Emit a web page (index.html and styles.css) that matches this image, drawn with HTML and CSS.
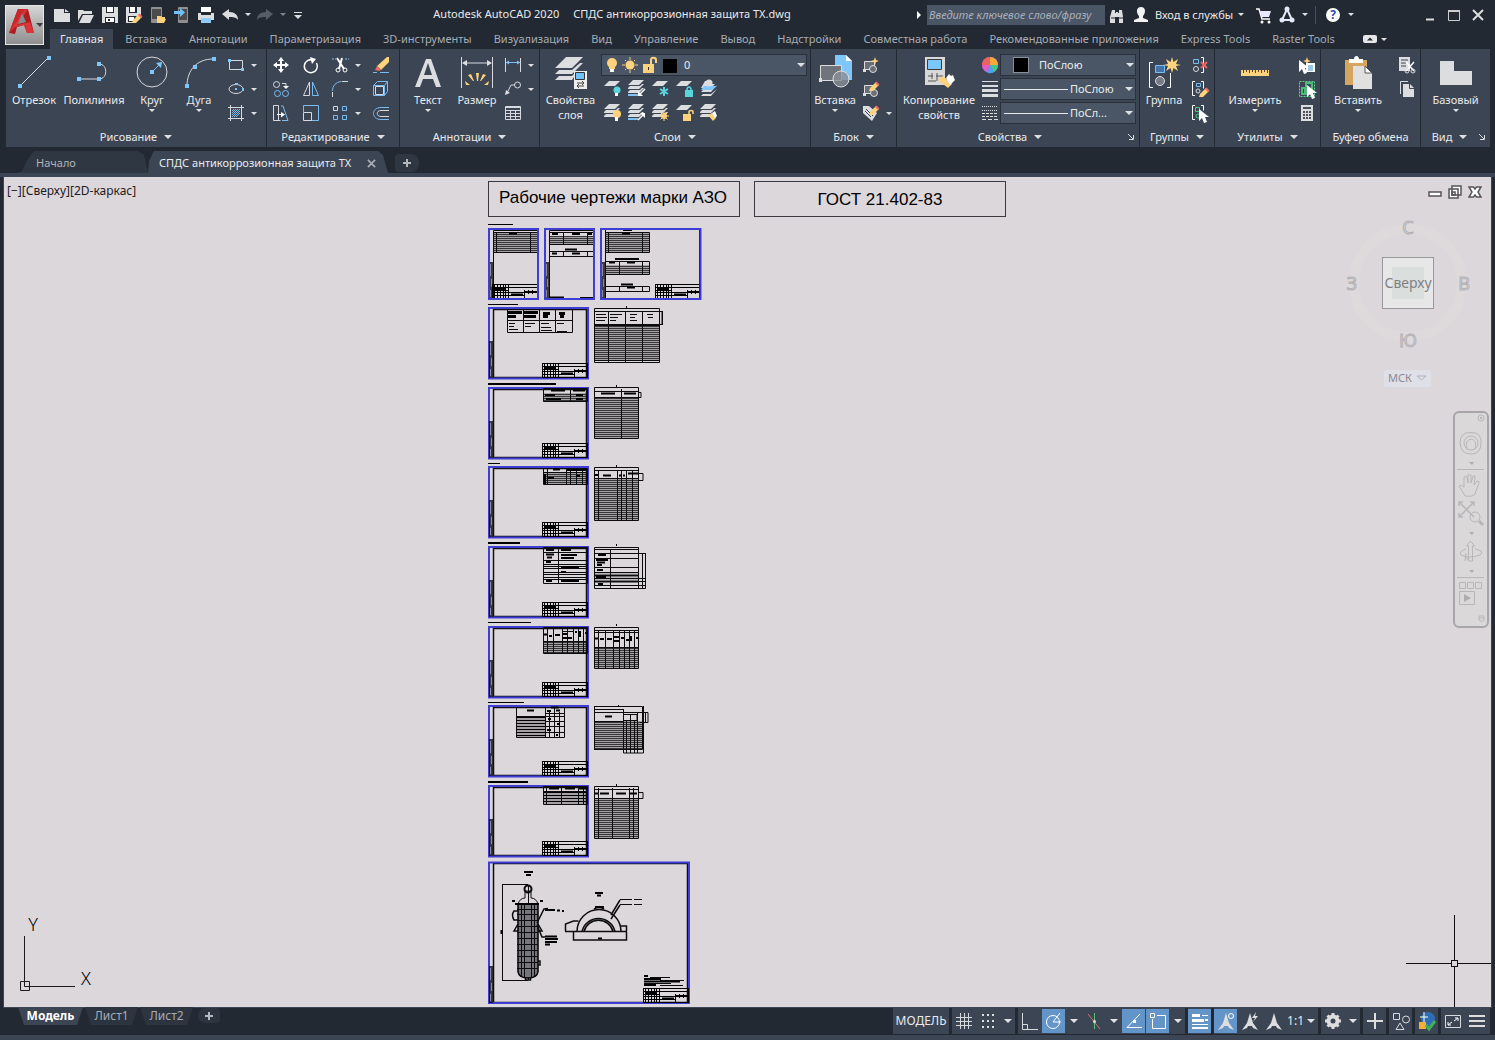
FILE: index.html
```html
<!DOCTYPE html>
<html lang="ru">
<head>
<meta charset="utf-8">
<title>Autodesk AutoCAD 2020</title>
<link rel="stylesheet" href="styles.css">
</head>
<body>
<svg class="sprite" width="0" height="0" aria-hidden="true">
  <defs>
    <pattern id="rows2" width="4" height="2" patternUnits="userSpaceOnUse"><rect width="4" height="1" fill="#000" opacity=".75"/><rect y="1" width="4" height="1" fill="#000" opacity=".25"/></pattern>
    <pattern id="rows3" width="4" height="3" patternUnits="userSpaceOnUse"><rect width="4" height="1" fill="#000"/><rect y="1" width="4" height="2" fill="#000" opacity=".25"/></pattern>
    <g id="stamp">
      <rect x=".5" y=".5" width="45" height="14" fill="none" stroke="#000"/>
      <path d="M1 3.500h16M1 6.500h15M1 8.500h44M1 11.500h32M16 3.500h29M2.500 1v13M5.500 1v13M8.500 1v13M11.500 1v13M13.500 1v13M16.500 1v13M32.500 6v8M33 7.500h12M36.500 6v4M40.500 6v4" stroke="#000" fill="none"/>
      <path d="M19 10.500h12M2 5h12" stroke="#000" stroke-width="2"/>
    </g>
    <g id="side">
      <rect x="0" y="0" width="4" height="37" fill="#000" opacity=".72"/>
      <path d="M1.500 2v12M2.500 17v8M1.500 28v7" stroke="#8d8a90"/>
    </g>
    <g id="sheet">
      <path d="M5.500 71V2.500H98.500V70.500H5" fill="none" stroke="#111" stroke-width="1.500"/>
      <rect x="1" y="1" width="99" height="70.500" fill="none" stroke="#3f3dd6" stroke-width="2"/>
      <use href="#side" x="1" y="34"/>
      <use href="#stamp" x="54" y="56"/>
    </g>
    <g id="stack"><path class="fw" d="M6 3h11l-5 5H1zM1 11l2-2h10l2-2h2l-5 5H1zM1 15l2-2h10l2-2h2l-5 5H1z"/></g>
    <g id="flat"><path class="fw" d="M6 4h11l-5 5H1z"/></g>
    <g id="cursor"><path d="M0 0v12l3-3 2 5 3-1-2-5h4z" fill="#fff"/></g>
    <g id="pencil"><path d="M0 9l1-3 6-6 3 3-6 6z" class="fy"/><path d="M6 1l1.500-1.500L10.500 2.500 9 4z" fill="#ef6a62"/></g>
    <g id="anno"><path class="fw" d="M8 0l3 10 5 7-5-2-1-2H6l-1 2-5 2 5-7z"/></g>
  </defs>
</svg>

<div class="app">
<header class="head">
  <button class="logo" aria-label="Меню приложения">
    <svg width="38" height="38" viewBox="0 0 38 38"><path d="M3 27L12 3h10l6 24h-7l-3-8-7 2-2 7z" fill="#a91e22"/><path d="M12 3h10l-11 16 13-3 4 11h-7l-2-8-10 2-6 6z" fill="#dd3438"/><path d="M16 7l4 9-8 2z" fill="#8a8b8d"/><path d="M3 27L17 6l3-3-8 0z" fill="#c8282c"/><path d="M30 17h7l-3 4z" fill="#404040"/></svg>
  </button>
  <div class="titlebar">
    <nav class="quick" aria-label="Быстрый доступ">
      <button class="ic" aria-label="Создать"><svg viewBox="0 0 24 24"><path class="fw" d="M4 6h10v4h6v9H4zM15 6l4 3h-4z"/></svg></button>
      <button class="ic" aria-label="Открыть"><svg viewBox="0 0 24 24"><path class="fw" d="M4 7h5l1 1h8v3H8l-4 7zM9 12h11l-4 8H5z"/></svg></button>
      <button class="ic" aria-label="Сохранить"><svg viewBox="0 0 24 24"><path class="fw" d="M4 4h16v16H4z"/><path d="M8 4h8v6H8zM7 14h10v6H7z" fill="#222933"/><path d="M9 4h6v5H9zM8 15h8v4H8z" fill="#fff"/><path d="M10 16h2v2h-2z" fill="#222933"/></svg></button>
      <button class="ic" aria-label="Сохранить как"><svg viewBox="0 0 24 24"><path class="fw" d="M4 4h15v9l-7 7H4z"/><path d="M7 4h8v6H7zM6 13h9l-4 6H6z" fill="#222933"/><path d="M8 4h5v5H8zM7 14h5v4H7z" fill="#fff"/><use href="#pencil" x="10" y="11"/></svg></button>
      <button class="ic" aria-label="Открыть с мобильного"><svg viewBox="0 0 24 24"><rect x="5" y="4" width="11" height="16" rx="1" fill="#8f8f8f"/><path d="M6 6h9v10H6z" fill="#4b4b4b"/><path class="fy" d="M11 13h4l1 1h3v2h1l-2 4h-7z"/></svg></button>
      <button class="ic" aria-label="Сохранить на мобильном"><svg viewBox="0 0 24 24"><rect x="8" y="4" width="10" height="16" rx="1" fill="#8f8f8f"/><path d="M9 6h8v11H9z" fill="#4b4b4b"/><path d="M4 8h6V5l5 4.500L10 14v-3H4z" fill="#6fc1f7"/></svg></button>
      <button class="ic" aria-label="Печать"><svg viewBox="0 0 24 24"><path d="M7 4h10v5H7z" fill="#fff"/><path class="fw" d="M4 10h16v7H4z"/><path d="M7 15h10v5H7z" fill="#8ccbfa"/><path d="M7 10h10v2H7z" fill="#222933"/></svg></button>
      <button class="ic" aria-label="Отменить"><svg viewBox="0 0 24 24"><path class="fw" d="M4 11l7-5v3c6 0 9 3 9 8-2-3-5-3-9-3v3z"/></svg></button>
      <button class="car" aria-label="Список отмены"></button>
      <button class="ic" aria-label="Повторить"><svg viewBox="0 0 24 24"><path fill="#565d67" d="M20 11l-7-5v3c-6 0-9 3-9 8 2-3 5-3 9-3v3z"/></svg></button>
      <button class="car dim" aria-label="Список повтора"></button>
      <button class="ic last" aria-label="Настройка"><svg viewBox="0 0 24 24"><path class="fw" d="M8 9h8v1H8zM8 12h8l-4 4z"/></svg></button>
    </nav>
    <div class="caption"><span>Autodesk AutoCAD 2020</span><span>СПДС антикоррозионная защита ТХ.dwg</span></div>
    <div class="service">
      <button class="more" aria-label="Развернуть поиск"></button>
      <input class="search" type="text" aria-label="Поиск" placeholder="Введите ключевое слово/фразу">
      <button class="ic" aria-label="Найти"><svg viewBox="0 0 24 24"><path class="fw" d="M7 7h3v3h1V9h2v1h1V7h3l1 7v6h-4v-6h-4v6H5v-6z"/><path d="M6 15h4M14 15h4" stroke="#222933"/></svg></button>
      <button class="ic" aria-label="Профиль"><svg viewBox="0 0 24 24"><path d="M12 4c5 0 5 6 2 9v2l5 2v2H5v-2l5-2v-2C7 10 7 4 12 4z" fill="#f2f2f2"/></svg></button>
      <button class="login">Вход в службы</button>
      <button class="car" aria-label="Меню входа"></button>
      <button class="ic" aria-label="Магазин"><svg viewBox="0 0 24 24"><path d="M5 6h3l3 10h8" fill="none" stroke="#fff" stroke-width="1.500"/><path d="M9 8h11l-2 6h-7z" fill="#e8e8ff"/><circle cx="11" cy="19" r="1.500" fill="#fff"/><circle cx="18" cy="19" r="1.500" fill="#fff"/></svg></button>
      <button class="ic" aria-label="Autodesk App Store"><svg viewBox="0 0 24 24"><path d="M12 6l5 11H7z" fill="none" stroke="#e4e8f8" stroke-width="2"/><circle cx="12" cy="6" r="2.500" fill="#e4e8f8"/><circle cx="7" cy="17" r="2.500" fill="#e4e8f8"/><circle cx="17" cy="17" r="2.500" fill="#e4e8f8"/></svg></button>
      <button class="car" aria-label="Меню приложений"></button>
      <i class="sep"></i>
      <button class="help" aria-label="Справка">?</button>
      <button class="car" aria-label="Меню справки"></button>
      <div class="win">
        <button class="ic" aria-label="Свернуть"><svg viewBox="0 0 24 24"><path d="M8 16.500h8" stroke="#ddd" stroke-width="2"/></svg></button>
        <button class="ic" aria-label="Развернуть"><svg viewBox="0 0 24 24"><path d="M6.500 7v10.500h11V7" fill="none" stroke="#ccc"/><path d="M6 8h12" stroke="#ccc" stroke-width="2"/></svg></button>
        <button class="ic" aria-label="Закрыть"><svg viewBox="0 0 24 24"><path d="M7 7l10 10M17 7L7 17" stroke="#ddd" stroke-width="2"/></svg></button>
      </div>
    </div>
  </div>
  <nav class="menu" aria-label="Вкладки ленты">
    <a class="on" href="#">Главная</a><a href="#">Вставка</a><a href="#">Аннотации</a><a href="#">Параметризация</a><a href="#">3D-инструменты</a><a href="#">Визуализация</a><a href="#">Вид</a><a href="#">Управление</a><a href="#">Вывод</a><a href="#">Надстройки</a><a href="#">Совместная работа</a><a href="#">Рекомендованные приложения</a><a href="#">Express Tools</a><a href="#">Raster Tools</a>
    <button class="fold" aria-label="Свернуть ленту"><svg width="14" height="8" viewBox="0 0 14 8"><rect width="14" height="8" rx="2" fill="#e6e6e6"/><path d="M4 5.500h6L7 2.500z" fill="#222933"/></svg></button>
    <button class="car" aria-label="Вид ленты"></button>
  </nav>
</header>

<div class="ribbon">
  <section class="panel p-draw">
    <div class="tools">
      <button class="big w56"><svg viewBox="0 0 34 34"><path class="ln" d="M3 31L32 2"/><path class="fb" d="M1 29h4v4H1zM30 1h4v4h-4z"/></svg>Отрезок</button>
      <button class="big w64"><svg viewBox="0 0 34 34"><path class="ln" d="M3 24h19c9 0 9-15 0-15"/><path class="fb" d="M0 22h4v4H0zM20 22h4v4h-4zM20 7h4v4h-4z"/></svg>Полилиния</button>
      <button class="big w52"><svg viewBox="0 0 34 34"><circle class="ln" cx="17" cy="17" r="15"/><path class="lb" d="M17 17l8-8"/><path class="fb" d="M15 15h4v4h-4zM27 7l-1 6-5-5z"/></svg>Круг<i class="tri"></i></button>
      <button class="big w42"><svg viewBox="0 0 34 34"><path class="ln" d="M5 31C5 15 15 4 31 4"/><path class="fb" d="M3 29h4v4H3zM11 10h4v4h-4zM30 2h4v4h-4z"/></svg>Дуга<i class="tri"></i></button>
      <div class="grid g-draw">
        <button class="ic" aria-label="Прямоугольник"><svg viewBox="0 0 24 24"><path class="ln" d="M5.500 7.500h13v9h-13z"/><path class="fb" d="M4 6h3v3H4zM17 15h3v3h-3z"/></svg></button><button class="car" aria-label="Ещё прямоугольники"></button>
        <button class="ic" aria-label="Эллипс"><svg viewBox="0 0 24 24"><ellipse class="ln" cx="12" cy="12" rx="7" ry="4.500"/><path class="fb" d="M11 11h2v2h-2zM11 6h3v2h-3zM18 11h2v3h-2z"/></svg></button><button class="car" aria-label="Ещё эллипсы"></button>
        <button class="ic" aria-label="Штриховка"><svg viewBox="0 0 24 24"><path class="ln" d="M4 6.500h16M4 17.500h16M6.500 4v16M17.500 4v16"/><path class="lb" d="M8 12l4-4M8 16l8-8M12 16l4-4M8 10l2-2M8 14l6-6M10 16l6-6"/></svg></button><button class="car" aria-label="Ещё штриховки"></button>
      </div>
    </div>
    <button class="foot">Рисование<i class="tri t8"></i></button>
  </section>

  <section class="panel p-edit">
    <div class="tools">
      <div class="grid g-edit">
        <button class="ic" aria-label="Перенести"><svg viewBox="0 0 24 24"><path d="M12 6v12M6 12h12" stroke="#fff" stroke-width="2"/><path d="M12 4l3 4H9zM12 20l3-4H9zM4 12l4-3v6zM20 12l-4-3v6z" fill="#fff"/></svg></button>
        <button class="ic" aria-label="Повернуть"><svg viewBox="0 0 24 24"><path d="M15 7.500A6.500 6.500 0 1 0 17.500 10" fill="none" stroke="#fff" stroke-width="1.500"/><path d="M11 4l6 2-4 5z" fill="#fff"/></svg></button>
        <button class="ic" aria-label="Обрезать"><svg viewBox="0 0 24 24"><path d="M4 6h4M17 6h4" stroke="#7cc0f5" stroke-dasharray="2 1"/><path d="M9 5l7 11M14 5l-3 11" stroke="#fff" stroke-width="2"/><circle cx="10" cy="17" r="2" fill="none" stroke="#fff"/><circle cx="17" cy="17" r="2" fill="none" stroke="#fff"/></svg></button>
        <button class="car" aria-label="Ещё обрезка"></button>
        <button class="ic" aria-label="Стереть"><svg viewBox="0 0 24 24"><path class="fy" d="M8 13L18 4h2v5l-8 8z"/><path d="M8 13l4 4-2 1-4-1z" fill="#ef6a62"/><path class="lb" d="M4 19.500h4M11 19.500h9"/></svg></button>

        <button class="ic" aria-label="Копировать"><svg viewBox="0 0 24 24"><circle class="ln" cx="7.500" cy="7.500" r="3"/><circle class="lb" cx="8.500" cy="16.500" r="3"/><circle class="lb" cx="16.500" cy="16.500" r="3"/><path class="ln" d="M13 6.500h4v4"/><path d="M14 9h6l-3 3z" fill="#fff"/></svg></button>
        <button class="ic" aria-label="Зеркало"><svg viewBox="0 0 24 24"><path class="ln" d="M10.500 5v13.500H4.500z"/><path class="lb" d="M13.500 5v13.500h6z"/></svg></button>
        <button class="ic" aria-label="Сопряжение"><svg viewBox="0 0 24 24"><path class="lb" d="M4.500 14c0-5 3-9 9-9.500"/><path class="ln" d="M4.500 15v5M14 4.500h6"/></svg></button>
        <button class="car" aria-label="Ещё сопряжения"></button>
        <button class="ic" aria-label="Расчленить"><svg viewBox="0 0 24 24"><path class="ln" d="M6.500 9.500h8v8h-8z"/><path class="lb" d="M4.500 8.500h11v10h-11zM4.500 8.500l4-4h10v10l-3 4M15.500 8.500l3-4"/></svg></button>

        <button class="ic" aria-label="Растянуть"><svg viewBox="0 0 24 24"><path class="ln" d="M11.500 19.500h-7v-15h5v15"/><path class="lb" d="M12 5h2l5 14.500h-6"/><path d="M8 13.500h6" stroke="#fff"/><path d="M12 11l4 2.500-4 3z" fill="#fff"/></svg></button>
        <button class="ic" aria-label="Масштаб"><svg viewBox="0 0 24 24"><path class="lb" d="M4.500 11V4.500h15v15H12"/><path class="ln" d="M4.500 11.500h8v8h-8z"/></svg></button>
        <button class="ic" aria-label="Массив"><svg viewBox="0 0 24 24"><path class="ln" d="M5.500 5.500h4v4h-4z"/><path class="lb" d="M14.500 5.500h4v4h-4zM5.500 14.500h4v4h-4zM14.500 14.500h4v4h-4z"/></svg></button>
        <button class="car" aria-label="Ещё массивы"></button>
        <button class="ic" aria-label="Подобие"><svg viewBox="0 0 24 24"><path class="lb" d="M20 6.500h-8c-10 0-10 12 0 12h8"/><path class="ln" d="M20 9.500h-8c-5 0-5 6 0 6h8"/></svg></button>
      </div>
    </div>
    <button class="foot">Редактирование<i class="tri t8"></i></button>
  </section>

  <section class="panel p-note">
    <div class="tools">
      <button class="big w56"><svg viewBox="0 0 34 34"><path class="fw" d="M15 4h5l10 28h-5l-3-8H12l-3 8H4zM17 8l-4 12h8z"/></svg>Текст<i class="tri"></i></button>
      <button class="big w42"><svg viewBox="0 0 34 34"><path class="ln" d="M1.500 2v31M32.500 2v31M3 8h28"/><path class="fw" d="M2 8l5-3v6zM32 8l-5-3v6z"/><path class="fy" d="M16 18h3l-1 8h-1zM8 20l3-1 3 7h-1zM26 20l-3-1-3 7h1zM5 26l1 4h4zM29 26l-1 4h-4z"/></svg>Размер</button>
      <div class="grid g-note">
        <button class="ic" aria-label="Линейный размер"><svg viewBox="0 0 24 24"><path class="ln" d="M4.500 5v14M19.500 5v14"/><path class="lb" d="M5 9.500h14"/><path class="fb" d="M5 9.500l3-2v4zM19 9.500l-3-2v4z"/></svg></button><button class="car" aria-label="Ещё размеры"></button>
        <button class="ic" aria-label="Выноска"><svg viewBox="0 0 24 24"><path class="ln" d="M6 16l4-8h4"/><circle class="ln" cx="16.500" cy="8" r="3"/><path class="fw" d="M4 18l1-5 4 3z"/></svg></button><button class="car" aria-label="Ещё выноски"></button>
        <button class="ic" aria-label="Таблица"><svg viewBox="0 0 24 24"><path class="ln" d="M4.500 5.500h15v13h-15zM4 9.500h16M4 12.500h16M4 15.500h16M9.500 9v10M14.500 9v10M4 6.500h16"/></svg></button>
      </div>
    </div>
    <button class="foot">Аннотации<i class="tri t8"></i></button>
  </section>

  <section class="panel p-layer">
    <div class="tools">
      <button class="big w61"><svg viewBox="0 0 34 34"><path class="fw" d="M12 2h17L18 13H1zM1 19l4-4h13l8-7h3L18 19zM1 25l4-4h13l4-4v2l-4 6z"/><path d="M20 16h13v18H20z" fill="#eee"/><path d="M21.500 17.500h9v7h-9z" fill="#6fc1f7" stroke="#333"/><path d="M23 28h7M23 31h7M28 26l2 2-2 2M25 29l-2 2 2 2" stroke="#444" fill="none"/></svg>Свойства<br>слоя</button>
      <div class="layers">
        <div class="combo">
          <svg width="82" height="20" viewBox="0 0 82 20"><circle class="fy" cx="10" cy="8" r="5"/><path class="fy" d="M7 10h6v4H7z"/><path d="M8 14h4v3H8z" fill="#fff"/><circle class="fy" cx="28" cy="10" r="4.500"/><path d="M28 2v3M28 15v3M20 10h3M33 10h3M23 5l1 1M33 5l-1 1M23 15l1-1M33 15l-1-1" stroke="#fdd27c"/><path class="fy" d="M41 9h11v9H41z"/><path d="M49 9V5c0-3 5-3 5 0v3" fill="none" stroke="#fdd27c" stroke-width="2"/><path d="M46 12h1v3h-1z" fill="#333"/><path d="M61 4h14v14H61z" fill="#000"/></svg>
          <select aria-label="Слой"><option>0</option></select><i class="tri t8"></i>
        </div>
        <div class="grid g-layer">
          <button class="ic" aria-label="Отключить"><svg viewBox="0 0 24 24"><use href="#flat" x="2"/><circle cx="16" cy="13" r="3.500" fill="#59d5dd"/><path d="M14 16h3v3h-3z" fill="#fff"/></svg></button>
          <button class="ic" aria-label="Изолировать"><svg viewBox="0 0 24 24"><use href="#stack" x="2"/><path d="M3 18h10" stroke="#7cc0f5" stroke-width="2"/><path d="M20 12l-5 5" stroke="#fff" stroke-width="1.500"/><path d="M13 14v5h5z" fill="#fff"/></svg></button>
          <button class="ic" aria-label="Заморозить"><svg viewBox="0 0 24 24"><use href="#flat" x="2"/><path d="M15 10v9M11 12l8 5M19 12l-8 5" stroke="#59d5dd" stroke-width="2"/></svg></button>
          <button class="ic" aria-label="Блокировать"><svg viewBox="0 0 24 24"><use href="#flat" x="2"/><path d="M12 13h8v7h-8z" fill="#59d5dd"/><path d="M14 13c0-4 4-4 4 0" fill="none" stroke="#59d5dd" stroke-width="1.500"/></svg></button>
          <button class="ic" aria-label="Сделать текущим"><svg viewBox="0 0 24 24"><path class="fw" d="M8 4h4l2 3h4l-4 4H4zM4 15l2-2h8l6-5-6 7zM4 19l2-2h8l6-5-6 7z"/><path class="fb" d="M7 9h13l-5 4H4z"/><circle class="fw" cx="12" cy="6" r="3.500"/></svg></button>
          <button class="ic" aria-label="Включить все"><svg viewBox="0 0 24 24"><use href="#stack" x="2"/><circle class="fy" cx="16" cy="13" r="4"/><path d="M14 16h3v4h-3z" fill="#fff"/></svg></button>
          <button class="ic" aria-label="Отменить изоляцию"><svg viewBox="0 0 24 24"><use href="#stack" x="2"/><path d="M3 18h10" stroke="#7cc0f5" stroke-width="2"/><path d="M13 19l5-5" stroke="#fff" stroke-width="1.500"/><path d="M15 12h5v5z" fill="#fff"/></svg></button>
          <button class="ic" aria-label="Разморозить все"><svg viewBox="0 0 24 24"><use href="#stack" x="2"/><circle class="fy" cx="15" cy="15" r="3"/><path d="M15 10v10M10 15h10M11.500 11.500l7 7M18.500 11.500l-7 7" stroke="#fdd27c"/></svg></button>
          <button class="ic" aria-label="Разблокировать"><svg viewBox="0 0 24 24"><use href="#flat" x="2"/><path class="fy" d="M10 13h8v7h-8z"/><path d="M16 13v-2c0-2 4-2 4 0v2" fill="none" stroke="#fdd27c" stroke-width="1.500"/></svg></button>
          <button class="ic" aria-label="Копировать свойства слоя"><svg viewBox="0 0 24 24"><use href="#stack" x="2"/><path class="fy" d="M11 14l4-2 4 5-3 3z"/><path d="M15 12l3-2 2 5-2 2z" fill="#fff"/></svg></button>
        </div>
      </div>
    </div>
    <button class="foot">Слои<i class="tri t8"></i></button>
  </section>

  <section class="panel p-block">
    <div class="tools">
      <button class="big w48"><svg viewBox="0 0 34 34"><path class="fb" d="M17 0h11l6 6v19H17z"/><path d="M28 0v6h6z" fill="#fff"/><path d="M2.500 10.500h21v15h-21z" fill="#70747d" stroke="#ddd"/><path class="fw" d="M1 23h3v4H1z"/><circle cx="23" cy="24" r="8" fill="#8a8e97" fill-opacity=".8" stroke="#ddd"/></svg>Вставка<i class="tri"></i></button>
      <div class="grid g-block">
        <button class="ic" aria-label="Создать блок"><svg viewBox="0 0 24 24"><path d="M5.500 8.500h10v8h-10z" fill="#6a6e77" stroke="#ddd"/><circle cx="14" cy="16" r="3.500" fill="#6a6e77" stroke="#ddd"/><path d="M4 16h3v3H4z" class="fw"/><path class="fy" d="M16 4l1 3 3 1-3 1-1 3-1-3-3-1 3-1z"/></svg></button><span></span>
        <button class="ic" aria-label="Редактор блоков"><svg viewBox="0 0 24 24"><path d="M5.500 8.500h10v8h-10z" fill="#6a6e77" stroke="#ddd"/><circle cx="15" cy="16" r="3.500" fill="#6a6e77" stroke="#ddd"/><path d="M4 16h3v3H4z" class="fw"/><use href="#pencil" x="10" y="5"/></svg></button><span></span>
        <button class="ic" aria-label="Редактировать атрибуты"><svg viewBox="0 0 24 24"><path class="fw" d="M4 5h6l8 7-5 8L4 12z"/><path d="M7 8l7 7M6 10l6 6" stroke="#3c4554"/><use href="#pencil" x="10" y="5"/></svg></button><button class="car" aria-label="Ещё атрибуты"></button>
      </div>
    </div>
    <button class="foot">Блок<i class="tri t8"></i></button>
  </section>

  <section class="panel p-prop">
    <div class="tools">
      <button class="big w84"><svg viewBox="0 0 34 34"><path d="M3 2h20v28H3z" fill="#d8d8d8"/><path d="M5.500 4.500h14v10h-14z" fill="#7cc7fa" stroke="#3b3b3b"/><path d="M6 21h5M14 21h7M6 26h8M10 18v6M15 18v8" stroke="#555"/><path class="fy" d="M16 25l5-4 9 8-4 4z"/><path d="M24 23l3-4 2 2 2-1 1 3 1 2-5 5z" fill="#fff"/></svg>Копирование<br>свойств</button>
      <div class="props">
        <svg class="pic" viewBox="0 0 24 24"><circle cx="12" cy="12" r="8" fill="#a970e0"/><path d="M12 12V4a8 8 0 0 1 8 8z" fill="#f9a83c"/><path d="M12 12H4a8 8 0 0 1 8-8z" fill="#f0625f"/><path d="M12 12l-8 0a8 8 0 0 0 3 6z" fill="#ef57b8"/><path d="M12 12h8a8 8 0 0 1-4 7z" fill="#4cc38a"/><path d="M12 12l4 7a8 8 0 0 1-6 1z" fill="#41a7ee"/></svg>
        <div class="combo"><i class="swatch"></i><select aria-label="Цвет"><option>ПоСлою</option></select><i class="tri t8"></i></div>
        <svg class="pic" viewBox="0 0 24 24"><path class="fw" d="M4 4h16v1H4zM4 8h16v2H4zM4 12h16v3H4zM4 17h16v3H4z"/></svg>
        <div class="combo"><i class="rule"></i><select class="clip" aria-label="Вес линий"><option>ПоСлою</option></select><i class="tri t8"></i></div>
        <svg class="pic" viewBox="0 0 24 24"><path d="M4 5.500h16M4 9.500h16" stroke="#ddd" stroke-dasharray="1 1"/><path d="M4 12.500h16M4 15.500h16" stroke="#ddd" stroke-dasharray="3 1"/><path d="M4 18.500h16" stroke="#ddd" stroke-dasharray="4 2"/></svg>
        <div class="combo"><i class="rule"></i><select class="clip" aria-label="Тип линий"><option>ПоСл...</option></select><i class="tri t8"></i></div>
      </div>
    </div>
    <div class="footrow"><button class="foot">Свойства<i class="tri t8"></i></button><button class="launch" aria-label="Палитра свойств"><svg viewBox="0 0 8 8"><path d="M1 1l5 5M6.500 2v4.500H2" class="ln"/></svg></button></div>
  </section>

  <section class="panel p-group">
    <div class="tools">
      <button class="big w48"><svg viewBox="0 0 34 34"><path d="M6 7.500H2.500v25H6M20 32.500h3.500V18" fill="none" stroke="#fff"/><path d="M8.500 10.500h9v7h-9z" fill="#4272a8" stroke="#7cc0f5"/><circle cx="13" cy="26" r="4.500" fill="#777c86" stroke="#ddd"/><path class="fy" d="M25 2l1.500 5L31 4l-2 5 5 1-5 1 2 5-4.500-3L25 18l-1.500-5L19 16l2-5-5-1 5-1-2-5 4.500 3z"/></svg>Группа</button>
      <div class="grid g-one">
        <button class="ic" aria-label="Разгруппировать"><svg viewBox="0 0 24 24"><path class="lb" d="M5.500 6.500h5v4h-5z"/><circle class="ln" cx="8" cy="16" r="2.500"/><path d="M13 4.500h2.500v15H13" fill="none" stroke="#fff"/><path d="M13 9l6 6M19 9l-6 6" stroke="#f0625f" stroke-width="2"/></svg></button>
        <button class="ic" aria-label="Редактирование группы"><svg viewBox="0 0 24 24"><path d="M7 4.500H4.500v14H7M13 4.500h2.500v7" fill="none" stroke="#fff"/><path class="lb" d="M8.500 6.500h4v3h-4z"/><circle class="ln" cx="10" cy="14" r="2"/><use href="#pencil" x="11" y="11"/></svg></button>
        <button class="ic" aria-label="Выбор группы"><svg viewBox="0 0 24 24"><path d="M7 4.500H4.500v14H7M13 4.500h2.500v5" fill="none" stroke="#fff"/><path d="M7.500 6.500h4v4h-4z" fill="none" stroke="#4fc779"/><circle cx="10" cy="15" r="2" fill="none" stroke="#4fc779"/><use href="#cursor" x="11" y="8"/></svg></button>
      </div>
    </div>
    <button class="foot">Группы<i class="tri t8"></i></button>
  </section>

  <section class="panel p-util">
    <div class="tools">
      <button class="big w80"><svg viewBox="0 0 34 34"><path class="fy" d="M3 15h28v6H3z"/><path d="M5.500 15v3M8.500 15v2M11.500 15v3M14.500 15v2M17.500 15v3M20.500 15v2M23.500 15v3M26.500 15v2M29.500 15v3" stroke="#55461f"/></svg>Измерить<i class="tri"></i></button>
      <div class="grid g-one">
        <button class="ic" aria-label="Быстрый выбор"><svg viewBox="0 0 24 24"><use href="#cursor" x="4" y="7"/><path class="fy" d="M12 4l1 3 3 1-3 1-1 3-1-3-3-1 3-1z"/><path d="M11 10h9v9h-9z" fill="#fff"/><path d="M13 13h5M13 15h5M13 17h5" stroke="#3d8fd0"/></svg></button>
        <button class="ic" aria-label="Выбрать всё"><svg viewBox="0 0 24 24"><path d="M4.500 4.500h15v15h-15z" fill="none" stroke="#5fd38a" stroke-dasharray="2 1"/><path d="M7 11h3v4h4v2H7zM11 6h6v8h-6z" fill="none" stroke="#4fb979" stroke-width="2"/><use href="#cursor" x="12" y="8"/></svg></button>
        <button class="ic" aria-label="Калькулятор"><svg viewBox="0 0 24 24"><path class="fw" d="M6 4h12v16H6z"/><path d="M8 6h8v2H8zM8 10h2v2H8zM11 10h2v2h-2zM14 10h2v2h-2zM8 13h2v2H8zM11 13h2v2h-2zM14 13h2v2h-2zM8 16h2v2H8zM11 16h2v2h-2zM14 16h2v2h-2z" fill="#4a4f58"/></svg></button>
      </div>
    </div>
    <button class="foot">Утилиты<i class="tri t8"></i></button>
  </section>

  <section class="panel p-clip">
    <div class="tools">
      <button class="big w74"><svg viewBox="0 0 34 34"><path d="M4 5h22v25H4z" fill="#d6a560"/><path d="M8 4h5c0-4 5-4 5 0h4v4H8z" fill="#fff"/><path d="M12 11h12l7 7v16H12z" fill="#e0e0e0"/><path d="M24 11v7h7z" fill="#fff" stroke="#555"/></svg>Вставить<i class="tri"></i></button>
      <div class="grid g-one">
        <button class="ic" aria-label="Вырезать"><svg viewBox="0 0 24 24"><path class="fw" d="M4 4h11v14H4z"/><path d="M6 7h7M6 10h5M6 13h5" stroke="#3c4554"/><path d="M11 9l8 9M19 9l-8 9" stroke="#fff" stroke-width="1.500"/><circle class="ln" cx="12" cy="18" r="2"/><circle class="ln" cx="18" cy="18" r="2"/></svg></button>
        <button class="ic" aria-label="Копировать в буфер"><svg viewBox="0 0 24 24"><path class="ln" d="M5.500 17V4.500H13"/><path class="fw" d="M8 7h7l4 4v9H8z"/><path d="M14.500 7v4.500H19" stroke="#3c4554" fill="none"/></svg></button>
      </div>
    </div>
    <button class="foot">Буфер обмена</button>
  </section>

  <section class="panel p-view">
    <div class="tools">
      <button class="big w69"><svg viewBox="0 0 34 34"><path class="fw" d="M1 6h14v10h18v14H1z"/></svg>Базовый<i class="tri"></i></button>
    </div>
    <div class="footrow"><button class="foot">Вид<i class="tri t8"></i></button><button class="launch" aria-label="Параметры вида"><svg viewBox="0 0 8 8"><path d="M1 1l5 5M6.500 2v4.500H2" class="ln"/></svg></button></div>
  </section>
</div>

<nav class="docs" aria-label="Файлы">
  <a class="doc home" href="#">Начало</a>
  <a class="doc cur" href="#">СПДС антикоррозионная защита ТХ<svg viewBox="0 0 10 10"><path d="M1 1l8 8M9 1L1 9" stroke="#a7acb4" stroke-width="2"/></svg></a>
  <button class="add" aria-label="Новый чертеж"><svg viewBox="0 0 10 10"><path d="M5 1v8M1 5h8" stroke="#b4b8be" stroke-width="2"/></svg></button>
</nav>

<main class="canvas">
  <div class="vp">[−][Сверху][2D-каркас]</div>
  <svg class="plan" width="1016" height="830" viewBox="4 177 1016 830">
    <g fill="none" stroke="#3c3a3e"><rect x="488.500" y="181.500" width="251" height="35"/><rect x="754.500" y="181.500" width="251" height="35"/></g>
    <text x="613" y="203" class="cap">Рабочие чертежи марки АЗО</text>
    <text x="880" y="205" class="cap">ГОСТ 21.402-83</text>
    <path d="M488 224.500h25M488 304.500h30M488 463.500h12M488 622.500h43M488 702.500h36" stroke="#000"/>
    <path d="M488 384h68M488 543h32M488 782h40" stroke="#000" stroke-width="2"/>

    <!-- title sheets -->
    <path d="M493.500 299V230.500H537.500V298.500H493" class="k"/><path d="M510 230h10M509 233.500h8" class="k2"/><rect x="494" y="232" width="43" height="21" fill="url(#rows2)"/><path class="k" d="M493.500 232.500h44v20h-44zM496.500 233v20M530.500 233v20"/><use href="#side" x="489" y="262"/><use href="#stamp" x="492" y="284"/><rect x="489" y="229" width="49" height="70" class="bl"/>
    <path d="M549.500 299V230.500H593.500V298.500H549" class="k"/><path d="M559 230h24M552 234h6M572 234h8M587 234h5M565 249.500h12M572 253.500h8M552 253.500h5M550 297.500h14M580 298h13" class="k2"/><rect x="550" y="236" width="43" height="9" fill="url(#rows2)"/><path class="k" d="M549.500 232.500h44v12h-44zM563.500 233v12M587.500 233v12M549.500 251.500h44v5h-44zM563.500 251v5M587.500 251v5"/><use href="#side" x="545" y="262"/><rect x="545" y="229" width="49" height="70" class="bl"/>
    <path d="M605.500 299V229.500H699.500V298.500H605" class="k"/><path d="M623 230h9M622 233.500h8M615 259h24M609 262.500h6M627 262.500h8M621 284.500h12M627 287.500h8" class="k2"/><rect x="606" y="232" width="43" height="21" fill="url(#rows2)"/><rect x="606" y="265" width="43" height="9" fill="url(#rows2)"/><path class="k" d="M605.500 232.500h44v20h-44zM608.500 233v20M642.500 233v20M605.500 261.500h44v13h-44zM619.500 261v13M642.500 261v13M605.500 286.500h44v5h-44zM619.500 286v5M642.500 286v5"/><use href="#side" x="601" y="262"/><use href="#stamp" x="655" y="284"/><rect x="601" y="229" width="99.500" height="70" class="bl"/>

    <use href="#sheet" x="488" y="307"/><use href="#sheet" x="488" y="387"/><use href="#sheet" x="488" y="466"/><use href="#sheet" x="488" y="546"/><use href="#sheet" x="488" y="626"/><use href="#sheet" x="488" y="705"/><use href="#sheet" x="488" y="785"/>

    <!-- sheet tables -->
    <path class="k" d="M507.500 309.500h65v23h-65zM507 320.500h66M523.500 310v22M539.500 310v22M555.500 310v22M509 323.500h6M525 323.500h10M541 323.500h8M557 323.500h7M509 326.500h5M525 326.500h6M541 327.500h10M509 329.500h9M541 330.500h11M557 331.500h10"/><path d="M508 312.500h14M524 312.500h14M508 316.500h8M524 316.500h12M543 313.500h7M559 313.500h6M543 316.500h5M560 316.500h4" stroke="#000" stroke-width="3"/>
    <rect x="594" y="324" width="66" height="37" fill="url(#rows2)"/><path class="k" d="M594.500 308.500h65v54h-65zM594 311.500h68v13h-68M608.500 311v51M625.500 311v51M642.500 311v51M596 314.500h10M610 314.500h12M630 314.500h7M647 314.500h6M596 317.500h11M610 317.500h8M630 317.500h5M648 317.500h5M596 320.500h9M610 320.500h6M630 320.500h7M594 325.500h66M594 360.500h66M662.500 311v14"/>

    <rect x="543" y="393" width="45" height="9" fill="url(#rows2)"/><path class="k" d="M543.500 388.500h44v13h-44zM570.500 389v13"/><path class="k2" d="M551 390.500h14M573 390.500h12M545 395h10M546 399h15M576 395h7M576 399h7"/>
    <rect x="594" y="398" width="45" height="40" fill="url(#rows2)"/><path class="k" d="M594.500 387.500h44v51h-44zM594 391.500h45M621.500 389v49M638 392.500h3v5h-3M594 397.500h45"/><path class="k2" d="M601 393.500h14M624 393.500h12"/>

    <rect x="543" y="472" width="45" height="12" fill="url(#rows2)"/><path class="k" d="M543.500 468.500h44v16h-44zM547.500 469v16M566.500 469v16M570.500 469v16M576.500 469v16M582.500 469v16M543 472.500h45"/><path class="k2" d="M553 469.500h7M545 474v10M577 476h3M567 470h20M548 478h6"/>
    <rect x="594" y="479" width="45" height="41" fill="url(#rows2)"/><path class="k" d="M594.500 467.500h44v53h-44zM594 470.500h45M598.500 470v50M617.500 470v50M621.500 470v50M626.500 470v50M632.500 470v50M638 473.500h5v7h-5M594 478.500h45"/><path class="k2" d="M603 475.500h8M619 475.500h2M623 475.500h2M628 473.500h10M595 475h3"/>

    <path class="k" d="M543.500 547.500h44v36h-44zM558.500 548v36M543 552.500h45M543 560.500h45M543 564.500h45M543 568.500h45M543 572.500h45M543 574.500h45M543 577.500h45M543 579.500h45M543 566.500h45"/><path class="k2" d="M546 550h8M561 550h10M546 554.500h8M561 555h16M547 557.500h5M561 558h13M546 562h5M561 567h18M561 572h5M546 581h6M561 581h18"/>
    <rect x="594" y="573" width="45" height="10" fill="url(#rows2)" opacity=".6"/>
    <path class="k" d="M594.500 547.500h44v41h-44zM594 549.500h45M610.500 549v39M594 553.500h51M594 558.500h45M594 567.500h45M594 572.500h45M594 575.500h45M594 578.500h51M594 581.500h51M594 585.500h51M645.500 553v35.500H638M642.500 553v35"/><path class="k2" d="M598 555h8M596 560h12M597 562.500h8M597 565h5M597 570h6M596 577h10M598 584h5"/>

    <rect x="543" y="641" width="45" height="12" fill="url(#rows2)"/><path class="k" d="M543.500 627.500h44v26h-44zM543 641.500h45M547.500 628v26M553.500 628v26M562.500 628v26M567.500 628v26M573.500 628v26M578.500 628v26M583.500 628v26M562 631.500h11"/><path class="k2" d="M544 634.500h3M549 636h3M555 635h5M563 634h4M569 638h3M575 632h2M580 631v6M585 633h3M563 638h6"/>
    <rect x="594" y="648" width="45" height="20" fill="url(#rows2)"/><path class="k" d="M594.500 627.500h44v41h-44zM594 630.500h45M594 632.500h45M594 647.500h45M598.500 630v38M605.500 630v38M613.500 630v38M619.500 630v38M624.500 630v38M629.500 630v38M634.500 630v38"/><path class="k2" d="M595 638.500h3M600 639h4M607 639h5M614 637h5M614 641h5M621 638h3M626 640h3M631 636v5M636 638h2"/>

    <rect x="516" y="717" width="29" height="20" fill="url(#rows3)"/><path class="k" d="M516.500 707.500h48v30h-48zM545.500 707v30M549.500 712v26M554.500 707v31M559.500 712v26M545 713.500h20M516 716.500h49M545 721.500h20M545 726.500h20M545 732.500h20"/><path class="k2" d="M527 710.500h7M551 707.500h8M547 711h4M556 710.500h4M548 719h3M557 724h3M547 730h4M556 735h2"/>
    <rect x="594" y="721" width="49" height="28" fill="url(#rows2)"/><path class="k" d="M594.500 706.500h48v43h-48M594 709.500h29M594 712.500h49M594 721.500h30M594.500 706v44M623.500 709v44h20V706M623 714.500h14v6h-14M630.500 714v39M637.500 712v41M626.500 720v33M634.500 720v33M640 712.500h8v10h-8M645.500 712v10"/><path class="k2" d="M605 716.500h7"/>

    <rect x="543" y="791" width="45" height="13" fill="url(#rows3)"/><path class="k" d="M543.500 786.500h44v18h-44zM546.500 787v18M561.500 787v18M578.500 787v18M583.500 787v18M543 791.500h45"/><path class="k2" d="M549 788.500h10M565 788.500h10M579 788.500h8"/>
    <rect x="594" y="799" width="45" height="39" fill="url(#rows2)"/><path class="k" d="M594.500 786.500h44v52h-44zM594 789.500h45M598.500 788v51M612.500 788v51M629.500 788v51M633.500 788v51M594 798.500h45M638 792.500h5v6h-5"/><path class="k2" d="M600 793.500h9M616 793.500h10M630 793.500h7M595 793.500h3"/>
    <path d="M626 307h1M616 386h1M616 466h1M616 545h1M616 625h1M618 706h1M616 785h1" class="k2"/>

    <!-- general arrangement -->
    <path d="M493.500 1003V863.500H687.500V1002.500H493" class="k" stroke-width="1.500"/>
    <rect x="489" y="862.500" width="200" height="140.500" class="bl"/>
    <use href="#side" x="489" y="966"/><use href="#stamp" x="643" y="988"/>
    <path class="k2" d="M524 872h9M526 875h5M595 893h8M597 895.500h4M545 910h10M557 910.500h3M562 911h2M545 936.500h12M545 939h13M545 942h12M545 944.500h5M644 976h4M644 979h17M644 981.500h36M644 985h12M501.500 930v4M598 938.500h4"/>
    <path class="k" d="M650 977.500h20M660 980.500h24M644 983.500h27M660 985.500h23M502.500 885v95M502 884.500h26M502 980.500h26M528.500 886v94M620 899.500h12M634 899.500h8M620 904.500h12M634 904.500h8"/>
    <path d="M518 904h20v68q-1 6-10 6t-10-6z" fill="#77747a" stroke="#000" stroke-width="1.500"/>
    <path class="k" d="M517 909.500h21M517 914.500h21M517 920.500h21M517 926.500h21M517 932.500h21M517 938.500h21M517 944.500h21M517 950.500h21M517 956.500h21M517 962.500h21M517 968.500h21M521.500 904v72M524.500 904v74M531.500 904v74M534.500 904v72"/>
    <path class="k" d="M516 904.500h23M518 904q2-6 7-6v-7h6v7q5 0 7 6"/><circle class="k" cx="528" cy="889" r="3.500" stroke-width="2"/><path class="k2" d="M515 904h24M512 901h3M540 901h3"/>
    <path class="k" stroke-width="1.500" d="M518 911h-4q-3 4 0 9h4M518 924l-4 7h4M538 924l4 7h-4M538 961h2v4h-2M537 923l7-14 4-.5M537 925l5 12h3M525.500 977v3h5v-3"/>
    <g class="k" stroke-width="1.500"><path d="M577 931.500a22 22 0 0 1 44 0M582 931.500a17 17 0 0 1 33 0M584 931.500a15 15 0 0 1 29 0"/><path d="M565 931.500h62M565.500 931v-7l8-3h5M626.500 931v-5h-6M594 909q5-3 10 0M573.500 932v8h53v-8M620 900l-9 15M620 905l-9 14"/></g><path class="k2" d="M595 907h9"/>
  </svg>

  <div class="mdi">
    <button aria-label="Свернуть чертеж"><svg viewBox="0 0 14 14"><path d="M1 7h12v4H1z" fill="#fff" stroke="#555" stroke-width="1.500"/></svg></button>
    <button aria-label="Восстановить чертеж"><svg viewBox="0 0 14 14"><path d="M4 1h9v9H4zM1 4h9v9H1z" fill="#fff" stroke="#555" stroke-width="1.500"/><path d="M4 7h3v3H4z" fill="none" stroke="#555" stroke-width="1.500"/></svg></button>
    <button aria-label="Закрыть чертеж"><svg viewBox="0 0 14 14"><path d="M1 2h4.500L7 4l1.500-2H13l-3 5 3 5H8.500L7 10l-1.500 2H1l3-5z" fill="#fff" stroke="#555" stroke-width="1.500"/></svg></button>
  </div>

  <svg class="cube" width="140" height="180" viewBox="1338 213 140 180">
    <circle cx="1408" cy="283" r="54" fill="none" stroke="#dedadb" stroke-width="10"/>
    <rect x="1382.500" y="257.500" width="51" height="51" fill="#e6e7e6" stroke="#98979a"/>
    <rect x="1392" y="267" width="32" height="32" fill="#dadfde"/>
    <text x="1408" y="288" class="top">Сверху</text>
    <text x="1408" y="234" class="dir">С</text><text x="1352" y="290" class="dir">З</text><text x="1464" y="290" class="dir">В</text><text x="1408" y="347" class="dir">Ю</text>
    <rect x="1384" y="370" width="47" height="17" rx="2" fill="#dfdfe8"/>
    <text x="1400" y="382" class="wcs">МСК</text><path d="M1417 376h9l-4.500 4z" fill="none" stroke="#b4b3bb"/>
  </svg>

  <svg class="navbar" width="36" height="217" viewBox="0 0 36 217">
    <rect x="1" y="1" width="34" height="215" rx="5" fill="#dbd8da" stroke="#a9a6ab" stroke-width="2"/>
    <g fill="none" stroke="#b9b6ba">
      <circle cx="28" cy="7" r="3"/><path d="M27 6l2 2M29 6l-2 2"/>
      <path d="M18 21.500q11 0 10 10.500 0 11-10 11t-11-11q0-11 11-10.500z"/><circle cx="18" cy="32" r="7"/><path d="M14 38c-4-13 12-13 8 0"/>
      <path d="M4 58.500h27M4 166.500h27"/>
      <path d="M11 83l-5-8q2-2 5 1V66q2-1 3 0l1 6V64q2-1 3 0v8l2-7q2-1 2 1l-1 8 3-4q3 0 2 2l-4 11q-2 3-10 2z"/>
      <path d="M6 91l15 15M21 91L6 106M6 95v-4h4M17 91h4v4M6 102v4h4" stroke-width="1.500"/><circle cx="22" cy="106" r="5"/><path d="M26 110l4 4" stroke-width="3"/>
      <path d="M15.500 150v-15h-2l4-5 4 5h-2v15z"/><path d="M13 138q-8 3-5 6 8 4 19 0 5-4-5-6M13 142l-1 8M12 146l4 3"/>
      <path d="M6.500 171.500h6v6h-6zM14.500 171.500h6v6h-6zM22.500 171.500h6v6h-6zM6.500 180.500h15v13h-15z"/><path d="M26 205h5v4q-2 3-5 0zM26 207h5"/>
    </g>
    <path d="M11 183l7 4-7 4zM16 51h5l-2 3zM16 121h5l-2 3zM16 159h5l-2 3z" fill="#b0adb1"/>
  </svg>

  <svg class="ucs" width="80" height="80" viewBox="0 0 80 80">
    <path d="M5.500 20v50.500H56M1.500 65.500h9v9h-9z" fill="none" stroke="#1c1b1d"/>
    <text x="14" y="15">Y</text><text x="67" y="69">X</text>
  </svg>
  <svg class="cross" width="85" height="92" viewBox="0 0 85 92"><path d="M48.500 0v45M48.500 52v40M0 48.500h45M52 48.500h33" stroke="#111"/><rect x="45.500" y="45.500" width="6" height="6" fill="none" stroke="#111"/></svg>
</main>

<footer class="status">
  <nav class="sheets" aria-label="Листы">
    <a class="model" href="#">Модель</a><a href="#">Лист1</a><a href="#">Лист2</a>
    <button aria-label="Новый лист"><svg viewBox="0 0 10 10"><path d="M5 1v8M1 5h8" stroke="#b4b8be" stroke-width="2"/></svg></button>
  </nav>
  <div class="modes">
    <div class="grp"><button class="space">МОДЕЛЬ</button></div>
    <div class="grp">
      <button class="st" aria-label="Сетка"><svg viewBox="0 0 24 24"><path class="ln" d="M8.500 4v16M12.500 4v16M16.500 4v16M4 8.500h16M4 12.500h16M4 16.500h16"/></svg></button>
      <button class="st" aria-label="Шаг"><svg viewBox="0 0 24 24"><path d="M6 6h14M6 12h14M6 18h14" stroke="#ddd" stroke-width="2" stroke-dasharray="2 3"/></svg></button>
      <button class="arr" aria-label="Параметры шага"></button>
    </div>
    <div class="grp">
      <button class="st" aria-label="Орто"><svg viewBox="0 0 24 24"><path class="ln" d="M4.500 4v16.500H20M4.500 15.500h5v5"/></svg></button>
      <button class="st blue" aria-label="Полярное отслеживание"><svg viewBox="0 0 24 24"><circle class="lw" cx="11" cy="13" r="6.500"/><path class="lw" d="M11 13l7-9M11 13h8"/></svg></button>
      <button class="arr" aria-label="Параметры полярного"></button>
      <button class="st" aria-label="Изометрия"><svg viewBox="0 0 24 24"><path d="M12.500 4v16" stroke="#57c27c"/><path d="M6 5l12 15" stroke="#cf6f70"/><circle cx="12.500" cy="12.500" r="1.500" fill="#ddd"/></svg></button>
      <button class="arr" aria-label="Параметры изометрии"></button>
      <button class="st blue" aria-label="Объектное отслеживание"><svg viewBox="0 0 24 24"><path class="lw" d="M18 5L5 18.500h15"/><path d="M11 11h3v3h-3z" fill="#fff"/></svg></button>
      <button class="st blue" aria-label="Объектная привязка"><svg viewBox="0 0 24 24"><path class="lw" d="M11 6.500h8.500v13h-13V10M4.500 4.500h4v4h-4z"/></svg></button>
      <button class="arr" aria-label="Параметры привязки"></button>
    </div>
    <div class="grp">
      <button class="st blue" aria-label="Вес линий"><svg viewBox="0 0 24 24"><path d="M4 5h8v3H4zM14 6h6v1h-6zM4 10h12v3H4zM4 15h16v1H4zM4 18h16v2H4zM17 10h3v2h-3z" fill="#fff"/></svg></button>
    </div>
    <div class="grp g-ann">
      <button class="st blue" aria-label="Видимость аннотаций"><svg viewBox="0 0 24 24"><use href="#anno" x="4" y="4"/><circle class="lw" cx="17" cy="7" r="2.500"/></svg></button>
      <button class="st" aria-label="Автомасштаб"><svg viewBox="0 0 24 24"><use href="#anno" x="4" y="4"/><path class="fw" d="M18 3l-4 6h3l-2 4 5-6h-3z"/></svg></button>
      <button class="st" aria-label="Масштаб аннотаций"><svg viewBox="0 0 24 24"><use href="#anno" x="4" y="4"/></svg></button>
      <button class="scale">1:1</button>
      <button class="arr" aria-label="Список масштабов"></button>
    </div>
    <div class="grp">
      <button class="st" aria-label="Рабочее пространство"><svg viewBox="0 0 24 24"><circle cx="12" cy="12" r="4.500" fill="none" stroke="#ddd" stroke-width="4"/><path d="M12 4v3M12 17v3M4 12h3M17 12h3M6.500 6.500l2 2M15.500 15.500l2 2M17.500 6.500l-2 2M8.500 15.500l-2 2" stroke="#ddd" stroke-width="3"/></svg></button>
      <button class="arr" aria-label="Список пространств"></button>
    </div>
    <div class="grp"><button class="st" aria-label="Монитор аннотаций"><svg viewBox="0 0 24 24"><path d="M12 4v16M4 12h16" stroke="#ddd" stroke-width="2"/></svg></button></div>
    <div class="grp"><button class="st" aria-label="Изоляция объектов"><svg viewBox="0 0 24 24"><path class="ln" d="M4.500 4.500h6v6h-6zM11 14l4 6.500H7z"/><circle class="ln" cx="17" cy="10.500" r="3.500"/></svg></button></div>
    <div class="grp"><button class="st" aria-label="Производительность"><svg viewBox="0 0 24 24"><circle cx="13" cy="10" r="7" fill="#2f6db5"/><path d="M9 3v11M5 8h8" stroke="#fff"/><path d="M4 13h7v7H4z" fill="#f2b035"/><path d="M11 16l3 4 6-8" fill="none" stroke="#3fae55" stroke-width="3"/></svg></button></div>
    <div class="grp g-end">
      <button class="st" aria-label="Полный экран"><svg viewBox="0 0 24 24"><path class="ln" d="M4.500 6.500h15v12h-15z"/><path d="M7 16l4-3M17 9l-4 3M7 13v3h3M17 12V9h-3" fill="none" stroke="#fff"/></svg></button>
      <button class="st" aria-label="Адаптация"><svg viewBox="0 0 24 24"><path d="M4 7h16M4 12h16M4 17h16" stroke="#ddd" stroke-width="2"/></svg></button>
    </div>
  </div>
</footer>
</div>
</body>
</html>
```
FILE: styles.css
```css
* { box-sizing: border-box; }
body { margin: 0; background: #222933; color: #e8eaed; font: 11px/16px "Noto Sans", "Open Sans", sans-serif; }
button, input, select { font: inherit; color: inherit; background: none; border: 0; padding: 0; margin: 0; }
a { color: inherit; text-decoration: none; }
.sprite { position: absolute; }
.ln { fill: none; stroke: #d6d9de; }
.lb { fill: none; stroke: #79bdf2; }
.lw { fill: none; stroke: #fff; }
.fw { fill: #dcdddf; }
.fb { fill: #7fc6fb; }
.fy { fill: #fdd27c; }
.k { fill: none; stroke: #0c0c0e; }
.k2 { fill: none; stroke: #000; stroke-width: 2; }
.bl { fill: none; stroke: #3f3dd6; stroke-width: 2; }

.app { display: flex; flex-direction: column; min-height: 100vh; border-bottom: 5px solid #3c4554; }

.head { display: grid; grid-template-columns: 45px 1fr; grid-template-rows: 29px 20px; padding-left: 5px; }
.logo { grid-row: span 2; width: 39px; height: 40px; margin-top: 5px; background: linear-gradient(#d5d5d5, #8f8f8f); border: 1px solid #e6e6e6; }
.logo svg { display: block; }
.titlebar { display: flex; height: 29px; }
.quick, .service { display: flex; align-items: center; height: 29px; }
.quick .last { margin-left: -2px; }
.caption { flex: 1; display: flex; justify-content: center; gap: 14px; align-items: center; height: 28px; white-space: nowrap; }
.ic { width: 24px; height: 24px; flex: none; display: block; }
.ic svg { display: block; width: 24px; height: 24px; }
.car { width: 11px; height: 24px; flex: none; display: flex; align-items: center; justify-content: center; }
.car::before, .tri { content: ""; display: block; border: 3px solid transparent; border-top-color: #dfe1e4; border-bottom: 0; }
.car.dim::before { border-top-color: #7e848d; }
.tri.t8 { border-width: 4px; border-bottom: 0; }
.more { width: 10px; height: 20px; margin-right: 3px; display: flex; align-items: center; justify-content: center; }
.more::before { content: ""; border: 4px solid transparent; border-left-color: #fff; border-right: 0; }
.search { width: 178px; height: 20px; padding: 0 2px; background: #4a5566; font-style: italic; }
.search::placeholder { color: #a9b0ba; opacity: 1; }
.login { width: 82px; white-space: nowrap; }
.service .car + .ic { margin-left: 5px; }
.sep { width: 1px; height: 18px; margin: 0 10px 0 5px; background: #4a515c; }
.help { width: 14px; height: 14px; border-radius: 7px; background: #fff; color: #2450b0; font-size: 12px; font-weight: 700; line-height: 14px; text-align: center; }
.help + .car { margin-left: 5px; }
.win { display: flex; margin-left: 62px; padding-right: 5px; }

.menu { display: flex; gap: 2px; color: #a7acb4; height: 20px; }
.menu a { padding: 2px 10px; white-space: nowrap; height: 20px; }
.menu a.on { background: #3c4554; color: #e6e8ea; }
.menu .fold { width: 14px; height: 20px; margin-left: 16px; display: flex; align-items: center; }
.menu .car { height: 20px; }

.ribbon { display: flex; gap: 1px; padding: 0 5px 0 6px; height: 98px; flex: none; }
.panel { background: #3c4554; display: flex; flex-direction: column; flex: none; padding-top: 4px; }
.tools { display: flex; height: 74px; }
.p-draw { width: 260px; } .p-edit { width: 132px; } .p-note { width: 139px; } .p-layer { flex: 1; }
.p-block { width: 85px; } .p-prop { width: 242px; } .p-group { width: 74px; } .p-util { width: 105px; }
.p-clip { width: 99px; } .p-view { width: 69px; }
.big { display: flex; flex-direction: column; align-items: center; flex: none; white-space: nowrap; line-height: 15px; padding-top: 2px; }
.big svg { width: 34px; height: 34px; display: block; margin-bottom: 3px; flex: none; }
.big .tri { margin-top: 2px; }
.w42 { width: 42px; } .w48 { width: 48px; } .w52 { width: 52px; } .w56 { width: 56px; } .w61 { width: 61px; }
.w64 { width: 64px; } .w69 { width: 69px; } .w74 { width: 74px; } .w80 { width: 80px; } .w84 { width: 84px; }
.grid { display: grid; grid-auto-rows: 24px; justify-items: center; align-content: start; }
.g-draw { grid-template-columns: 24px 11px; margin-left: 4px; }
.g-edit { grid-template-columns: 28px 32px 26px 10px 36px; }
.g-note { grid-template-columns: 24px 11px; margin-left: 3px; }
.g-layer { grid-template-columns: repeat(5, 24px); }
.g-block { grid-template-columns: 24px 11px; }
.g-one { grid-template-columns: 24px; }
.layers { flex: 1; padding-right: 3px; }
.combo { display: flex; align-items: center; height: 22px; margin: 1px 0; padding-right: 1px; background: #4a5566; border: 1px solid #2a313c; min-width: 0; }
.combo select { appearance: none; flex: 1; min-width: 0; height: 20px; }
.props { flex: 1; display: grid; grid-template-columns: 19px 1fr; grid-auto-rows: 24px; padding-right: 3px; align-items: center; }
.pic { width: 24px; height: 24px; margin-left: -3px; }
.swatch { width: 16px; height: 16px; background: #000; border: 1px solid #8a8f98; margin: 0 10px 0 12px; flex: none; }
.rule { width: 64px; height: 1px; margin: 0 2px 0 3px; background: #e6e8ea; flex: none; }
.combo .clip { flex: none; width: 46px; overflow: hidden; margin-right: 9px; }
.foot { display: flex; align-items: center; justify-content: center; gap: 7px; height: 20px; width: 100%; }
.footrow { display: flex; align-items: center; }
.p-prop .foot { padding-right: 4px; }
.launch { width: 12px; height: 20px; flex: none; display: flex; align-items: center; }
.launch svg { width: 8px; height: 8px; }

.docs { display: flex; height: 30px; flex: none; padding: 4px 0 0 18px; border-bottom: 4px solid #3c4554; }
.doc { height: 22px; padding: 4px 12px 2px 18px; white-space: nowrap; display: flex; align-items: center; }
.doc.home { width: 130px; background: #2f3742; color: #b0b4bb; clip-path: polygon(0 100%, 4px 90%, 10px 8px, 16px 0, 120px 0, 126px 4px, 130px 100%); }
.doc.cur { width: 240px; padding-left: 11px; justify-content: space-between; background: #3c4554; clip-path: polygon(0 100%, 1px 10px, 6px 0, 230px 0, 235px 4px, 240px 100%); }
.doc svg { width: 9px; height: 9px; }
.add { width: 24px; height: 18px; margin: 3px 0 0 7px; background: #2f3742; border-radius: 4px 8px 8px 4px; display: flex; align-items: center; justify-content: center; }
.add svg, .sheets svg { width: 10px; height: 10px; }

.canvas { flex: 1; position: relative; min-height: 830px; margin: 0 4px; background: #dcd7db; color: #1d1c1f; overflow: hidden; outline: 1px solid #3c4554; }
.vp { position: absolute; left: 3px; top: 6px; font-size: 12px; }
.plan { position: absolute; left: 0; top: 0; }
.cap { font: 17px "Liberation Sans", Arial, sans-serif; text-anchor: middle; }
.mdi { position: absolute; right: 9px; top: 8px; display: flex; gap: 6px; }
.mdi button, .mdi svg { width: 14px; height: 14px; display: block; }
.cube { position: absolute; right: 13px; top: 36px; }
.cube text { text-anchor: middle; }
.top { font-size: 14px; fill: #808084; }
.dir { font-size: 18px; fill: #dcd9db; stroke: #b3b0b4; }
.wcs { font-size: 11px; fill: #8b8a90; }
.navbar { position: absolute; right: 2px; top: 234px; }
.ucs { position: absolute; left: 15px; bottom: 11px; overflow: visible; }
.ucs text { font-size: 18px; font-weight: 300; text-anchor: middle; }
.cross { position: absolute; right: 0; bottom: 0; }

.status { display: flex; justify-content: space-between; height: 28px; flex: none; padding: 0 5px 0 18px; font-size: 12px; }
.sheets { display: flex; height: 18px; gap: 2px; }
.sheets a { height: 18px; width: 53px; text-align: center; line-height: 18px; background: #2c343f; color: #a7acb4; clip-path: polygon(0 0, 100% 0, calc(100% - 6px) 100%, 6px 100%); }
.sheets a.model { width: 65px; background: #3c4554; color: #fff; font-weight: 700; }
.sheets button { width: 22px; height: 15px; margin: 1px 0 0 3px; background: #2c343f; border-radius: 8px 4px 4px 8px; display: flex; align-items: center; justify-content: center; }
.modes { display: flex; gap: 3px; }
.grp { display: flex; align-items: center; gap: 1px; height: 26px; margin-top: 1px; background: #3c4554; }
.space { width: 56px; }
.st { width: 23px; height: 24px; flex: none; display: flex; align-items: center; justify-content: center; }
.st svg { width: 24px; height: 24px; flex: none; }
.st.blue { background: #6495c8; }
.arr { width: 15px; height: 24px; display: flex; align-items: center; justify-content: center; }
.arr::before { content: ""; border: 4px solid transparent; border-top-color: #dfe1e4; border-bottom: 0; }
.g-ann, .g-end { padding-right: 2px; }
.g-ann .arr { width: 11px; }
.scale { width: 18px; text-align: right; }
```
